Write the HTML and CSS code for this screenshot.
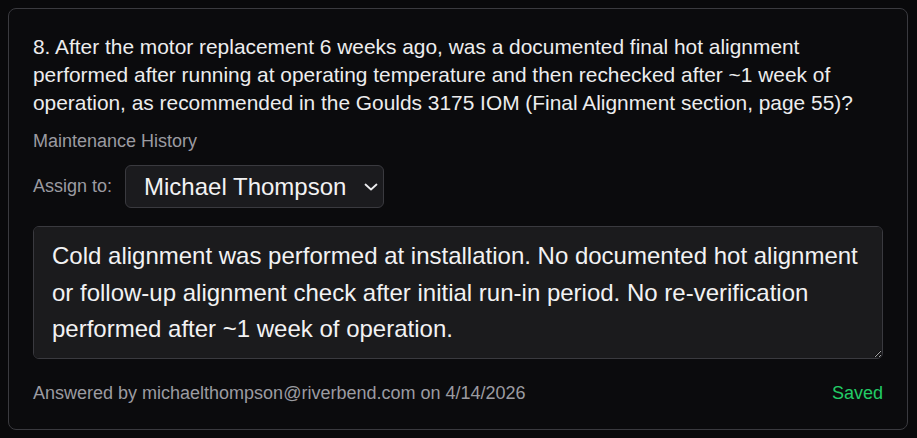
FILE: index.html
```html
<!DOCTYPE html>
<html>
<head>
<meta charset="utf-8">
<link rel="stylesheet" href="styles.css">
</head>
<body>
<div class="card">
  <div class="question">8. After the motor replacement 6 weeks ago, was a documented final hot alignment performed after running at operating temperature and then rechecked after ~1 week of operation, as recommended in the Goulds 3175 IOM (Final Alignment section, page 55)?</div>
  <div class="category">Maintenance History</div>
  <div class="assign">
    <label class="assign-label">Assign to:</label>
    <div class="select-wrap">
      <select class="assign-select">
        <option>Michael Thompson</option>
      </select>
      <svg class="chevron" width="14" height="8" viewBox="0 0 14 8"><path d="M1.5 1.5 L7 6.5 L12.5 1.5" fill="none" stroke="#ececee" stroke-width="1.8" stroke-linecap="round" stroke-linejoin="round"/></svg>
    </div>
  </div>
  <textarea class="answer">Cold alignment was performed at installation. No documented hot alignment or follow-up alignment check after initial run-in period. No re-verification performed after ~1 week of operation.</textarea>
  <div class="footer">
    <span class="answered">Answered by michaelthompson@riverbend.com on 4/14/2026</span>
    <span class="saved">Saved</span>
  </div>
</div>
</body>
</html>
```

FILE: styles.css
```css
html, body {
  margin: 0;
  background: #09090b;
}
body {
  padding: 8px;
  font-family: "Liberation Sans", Arial, sans-serif;
  color: #ececee;
}
.card {
  width: 900px;
  height: 422px;
  box-sizing: border-box;
  border: 1px solid #3a3a3f;
  border-radius: 8px;
  background: #0b0b0d;
  padding: 24px;
  display: flex;
  flex-direction: column;
}
.question {
  font-size: 20.9px;
  line-height: 28px;
  color: #ededee;
}
.category {
  margin-top: 12px;
  font-size: 18px;
  line-height: 24px;
  color: #9b9ba1;
}
.assign {
  margin-top: 12px;
  display: flex;
  align-items: center;
  gap: 13px;
}
.assign-label {
  font-size: 18px;
  color: #9b9ba1;
}
.select-wrap {
  position: relative;
  display: flex;
}
.assign-select {
  appearance: none;
  -webkit-appearance: none;
  height: 43px;
  width: 259px;
  box-sizing: border-box;
  background: #1b1b1e;
  color: #f2f2f3;
  border: 1px solid #3a3a3f;
  border-radius: 6px;
  font-family: "Liberation Sans", Arial, sans-serif;
  font-size: 24px;
  padding: 0 30px 0 18px;
}
.chevron {
  position: absolute;
  right: 6px;
  top: 18px;
  pointer-events: none;
}
.answer {
  margin-top: 18px;
  height: 133px;
  box-sizing: border-box;
  width: 100%;
  background: #1b1b1d;
  color: #f2f2f3;
  border: 1px solid #3a3a3f;
  border-radius: 6px;
  font-family: "Liberation Sans", Arial, sans-serif;
  font-size: 24px;
  line-height: 36.5px;
  padding: 11px 18px;
  resize: vertical;
  color-scheme: dark;
}
.footer {
  margin-top: 22px;
  display: flex;
  justify-content: space-between;
  font-size: 18px;
  line-height: 24px;
}
.answered {
  color: #9b9ba1;
}
.saved {
  color: #22cc66;
}
```
